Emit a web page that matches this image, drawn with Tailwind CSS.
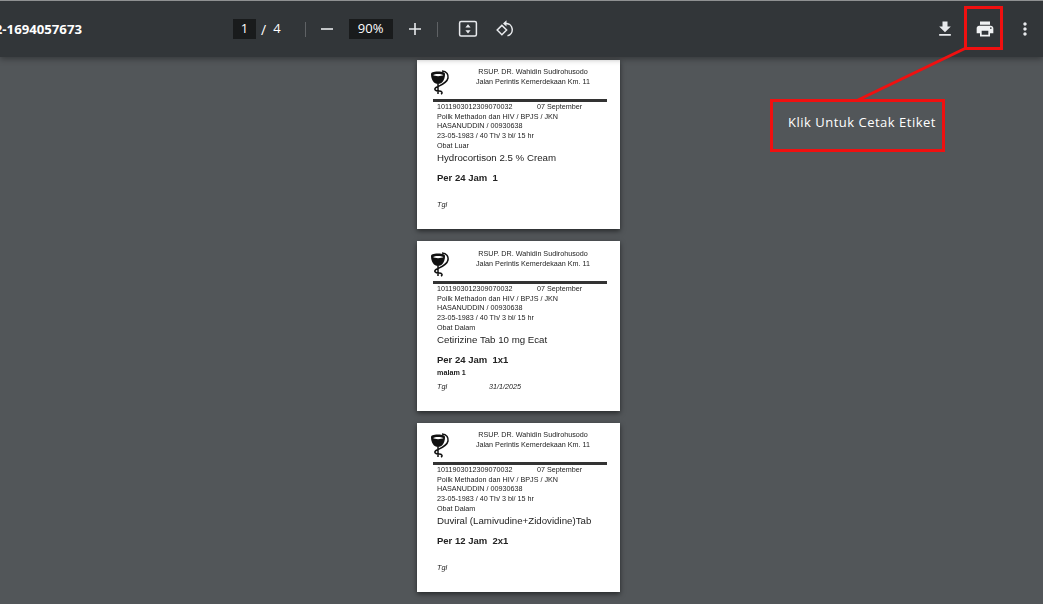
<!doctype html>
<html>
<head>
<meta charset="utf-8">
<script src="https://cdn.jsdelivr.net/npm/@tailwindcss/browser@4"></script>
</head>
<body class="m-0">
<div class="relative w-[1043px] h-[604px] overflow-hidden bg-[#525659] font-['Open_Sans',sans-serif]">
  <header class="relative z-10 h-[57px] bg-[#323639] border-t border-[#8f9192] shadow-[0_2px_6px_rgba(0,0,0,0.35)] flex items-center text-white">
    <div class="w-[82px] mt-[2px] flex justify-end overflow-hidden shrink-0 text-[13.200px] font-bold whitespace-nowrap">DI-2-1694057673</div>
    <div class="ml-[151px] w-[23px] h-[20px] bg-[#191b1c] flex items-center justify-center text-[13px]">1</div>
    <span class="ml-[5px] text-[14px]">/</span>
    <span class="ml-[7px] text-[13px]">4</span>
    <div class="ml-[24px] w-px h-[15px] bg-[#5f6265]"></div>
    <svg class="ml-[14px]" width="14" height="14" viewBox="0 0 14 14"><path d="M1 7h12" stroke="#e8eaed" stroke-width="1.6"/></svg>
    <div class="ml-[15px] w-[44px] h-[20px] bg-[#191b1c] flex items-center justify-center text-[13px]">90%</div>
    <svg class="ml-[15px]" width="14" height="14" viewBox="0 0 14 14"><path d="M1 7h12M7 1v12" stroke="#e8eaed" stroke-width="1.6"/></svg>
    <div class="ml-[15px] w-px h-[15px] bg-[#5f6265]"></div>
    <svg class="ml-[20px]" width="20" height="20" viewBox="0 0 20 20"><rect x="1.6" y="2.6" width="16.8" height="14.4" rx="1.5" fill="none" stroke="#e8eaed" stroke-width="1.5"/><path d="M10 5.2l2.6 3.2H7.400zM10 14.400l-2.600-3.200h5.200z" fill="#e8eaed"/></svg>
    <svg class="ml-[17px]" width="20" height="20" viewBox="0 0 20 20"><path d="M6.900 6.400L2.200 11l4.700 4.700 4.700-4.700z" fill="none" stroke="#e8eaed" stroke-width="1.500"/><path d="M9 4.400h2a6.300 6.300 0 0 1 1.500 12.400" fill="none" stroke="#e8eaed" stroke-width="1.500"/><path d="M11.500 1.200L8 4.400l3.500 3.200z" fill="#e8eaed"/></svg>
    <svg class="ml-auto" width="20" height="20" viewBox="0 0 24 24" fill="#e8eaed"><path d="M19 9h-4V3H9v6H5l7 7 7-7zM5 18v2h14v-2H5z"/></svg>
    <svg class="ml-[20px]" width="20" height="20" viewBox="0 0 24 24" fill="#f1f3f4"><path d="M19 8H5c-1.660 0-3 1.340-3 3v6h4v4h12v-4h4v-6c0-1.660-1.340-3-3-3zm-3 11H8v-5h8v5zm3-7c-.55 0-1-.45-1-1s.45-1 1-1 1 .45 1 1-.45 1-1 1zm-1-9H6v4h12V3z"/></svg>
    <svg class="ml-[20px] mr-[8px]" width="20" height="20" viewBox="0 0 24 24" fill="#e8eaed"><path d="M12 8c1.100 0 2-.9 2-2s-.9-2-2-2-2 .9-2 2 .9 2 2 2zm0 2c-1.100 0-2 .9-2 2s.9 2 2 2 2-.9 2-2-.9-2-2-2zm0 6c-1.100 0-2 .9-2 2s.9 2 2 2 2-.9 2-2-.9-2-2-2z"/></svg>
  </header>

  <main class="flex flex-col gap-3 pt-[3px] pl-[417px] font-['Liberation_Sans',Arial,sans-serif] text-[#222]">

    <article class="w-[203px] h-[169px] shrink-0 bg-white shadow-[0_2px_5px_rgba(0,0,0,0.55)] pt-[7px] blur-[0.3px]">
      <div class="flex h-[20px]">
        <svg class="ml-[13px] mt-[3px] shrink-0 overflow-visible" width="19" height="25" viewBox="0 0 19 25"><path d="M1 4C1 2.500 3 1.500 8 1.500C13 1.500 15 2.500 15 4C15 10 12 14 8 14C4 14 1 10 1 4Z" fill="#111"/><path d="M3 5C5 6.500 11 6.500 13.500 5C11 3.500 5 3.500 3 5Z" fill="#fff"/><path d="M12 1C17 1 18.500 5 18 8C17 13 11 15 7 17C3 19 5 21 9 21C12 21 13 23 11 24M8 14V24" fill="none" stroke="#111" stroke-width="1.500"/></svg>
        <div class="ml-[-12px] flex-1 text-center text-[7.2px] leading-[10px] pl-[9px]">
          <p>RSUP. DR. Wahidin Sudirohusodo</p>
          <p>Jalan Perintis Kemerdekaan Km. 11</p>
        </div>
      </div>
      <div class="ml-[16px] mt-[12px] w-[174px] h-[2.500px] bg-[#333]"></div>
      <div class="pl-[20px] text-[7.2px] leading-[9.700px] mt-[0.500px]">
        <p class="flex"><span class="w-[100px]">1011903012309070032</span><span>07 September</span></p>
        <p>Poilk Methadon dan HIV / BPJS / JKN</p>
        <p>HASANUDDIN / 00930638</p>
        <p>23-05-1983 / 40 Th/ 3 bl/ 15 hr</p>
        <p>Obat Luar</p>
        <p class="text-[9.700px] leading-[13px]">Hydrocortison 2.5 % Cream</p>
        <div class="h-[28px] mt-[8.500px]">
          <p class="text-[9.500px] leading-[12px] font-bold">Per 24 Jam&nbsp; 1</p>
        </div>
        <p class="flex italic leading-[10px]"><span class="w-[52px]">Tgl</span></p>
      </div>
    </article>

    <article class="w-[203px] h-[170px] shrink-0 bg-white shadow-[0_2px_5px_rgba(0,0,0,0.55)] pt-[8px] blur-[0.3px]">
      <div class="flex h-[20px]">
        <svg class="ml-[13px] mt-[3px] shrink-0 overflow-visible" width="19" height="25" viewBox="0 0 19 25"><path d="M1 4C1 2.500 3 1.500 8 1.500C13 1.500 15 2.500 15 4C15 10 12 14 8 14C4 14 1 10 1 4Z" fill="#111"/><path d="M3 5C5 6.500 11 6.500 13.500 5C11 3.500 5 3.500 3 5Z" fill="#fff"/><path d="M12 1C17 1 18.500 5 18 8C17 13 11 15 7 17C3 19 5 21 9 21C12 21 13 23 11 24M8 14V24" fill="none" stroke="#111" stroke-width="1.500"/></svg>
        <div class="ml-[-12px] flex-1 text-center text-[7.2px] leading-[10px] pl-[9px]">
          <p>RSUP. DR. Wahidin Sudirohusodo</p>
          <p>Jalan Perintis Kemerdekaan Km. 11</p>
        </div>
      </div>
      <div class="ml-[16px] mt-[12px] w-[174px] h-[2.500px] bg-[#333]"></div>
      <div class="pl-[20px] text-[7.2px] leading-[9.700px] mt-[0.500px]">
        <p class="flex"><span class="w-[100px]">1011903012309070032</span><span>07 September</span></p>
        <p>Poilk Methadon dan HIV / BPJS / JKN</p>
        <p>HASANUDDIN / 00930638</p>
        <p>23-05-1983 / 40 Th/ 3 bl/ 15 hr</p>
        <p>Obat Dalam</p>
        <p class="text-[9.700px] leading-[13px]">Cetirizine Tab 10 mg Ecat</p>
        <div class="h-[28px] mt-[8.500px]">
          <p class="text-[9.500px] leading-[12px] font-bold">Per 24 Jam&nbsp; 1x1</p>
          <p class="mt-[2px] text-[7.200px] leading-[9px] font-bold">malam 1</p>
        </div>
        <p class="flex italic leading-[10px]"><span class="w-[52px]">Tgl</span><span>31/1/2025</span></p>
      </div>
    </article>

    <article class="w-[203px] h-[169px] shrink-0 bg-white shadow-[0_2px_5px_rgba(0,0,0,0.55)] pt-[7px] blur-[0.3px]">
      <div class="flex h-[20px]">
        <svg class="ml-[13px] mt-[3px] shrink-0 overflow-visible" width="19" height="25" viewBox="0 0 19 25"><path d="M1 4C1 2.500 3 1.500 8 1.500C13 1.500 15 2.500 15 4C15 10 12 14 8 14C4 14 1 10 1 4Z" fill="#111"/><path d="M3 5C5 6.500 11 6.500 13.500 5C11 3.500 5 3.500 3 5Z" fill="#fff"/><path d="M12 1C17 1 18.500 5 18 8C17 13 11 15 7 17C3 19 5 21 9 21C12 21 13 23 11 24M8 14V24" fill="none" stroke="#111" stroke-width="1.500"/></svg>
        <div class="ml-[-12px] flex-1 text-center text-[7.2px] leading-[10px] pl-[9px]">
          <p>RSUP. DR. Wahidin Sudirohusodo</p>
          <p>Jalan Perintis Kemerdekaan Km. 11</p>
        </div>
      </div>
      <div class="ml-[16px] mt-[12px] w-[174px] h-[2.500px] bg-[#333]"></div>
      <div class="pl-[20px] text-[7.2px] leading-[9.700px] mt-[0.500px]">
        <p class="flex"><span class="w-[100px]">1011903012309070032</span><span>07 September</span></p>
        <p>Poilk Methadon dan HIV / BPJS / JKN</p>
        <p>HASANUDDIN / 00930638</p>
        <p>23-05-1983 / 40 Th/ 3 bl/ 15 hr</p>
        <p>Obat Dalam</p>
        <p class="text-[9.700px] leading-[13px]">Duviral (Lamivudine+Zidovidine)Tab</p>
        <div class="h-[28px] mt-[8.500px]">
          <p class="text-[9.500px] leading-[12px] font-bold">Per 12 Jam&nbsp; 2x1</p>
        </div>
        <p class="flex italic leading-[10px]"><span class="w-[52px]">Tgl</span></p>
      </div>
    </article>
  </main>

  <!-- annotation overlay -->
  <div class="absolute z-20 left-[964px] top-[6px] w-[39px] h-[44px] border-[3px] border-[#f01010]"></div>
  <svg class="absolute z-20 left-0 top-0" width="1043" height="604"><line x1="966" y1="48" x2="858" y2="100" stroke="#f01010" stroke-width="3"/></svg>
  <div class="absolute z-20 left-[770px] top-[99px] w-[175px] h-[53px] border-[3px] border-[#f01010] flex items-center pl-[15px] pb-[6px] text-white text-[13px] font-medium tracking-[0.5px] whitespace-nowrap">Klik Untuk Cetak Etiket</div>
</div>
</body>
</html>
